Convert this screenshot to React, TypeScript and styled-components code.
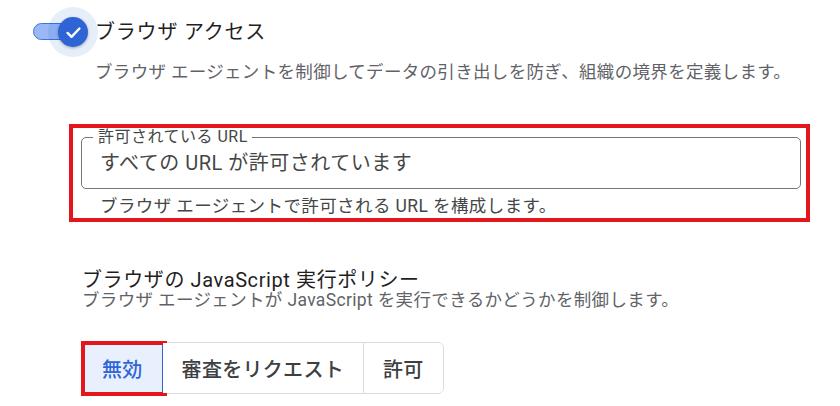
import styled, { createGlobalStyle } from 'styled-components';

const GlobalStyle = createGlobalStyle`
  body {
    margin: 0;
    background: #ffffff;
    font-family: Roboto, 'Noto Sans CJK JP', sans-serif;
    color: #1f1f1f;
  }
`;

const Page = styled.div`
  padding: 8px 0 0 33px;
  width: 840px;
  height: 406px;
  box-sizing: border-box;
  overflow: hidden;
`;

const HeaderRow = styled.div`
  display: flex;
  align-items: center;
  height: 48px;
`;

const Toggle = styled.span`
  position: relative;
  flex: none;
  width: 62px;
  height: 48px;
`;

const Track = styled.span`
  position: absolute;
  left: 0;
  top: 15px;
  width: 52px;
  height: 17px;
  border-radius: 9px;
  background: #9ab8f4;
  border: 1px solid #3f74de;
  box-sizing: border-box;
`;

const Halo = styled.span`
  position: absolute;
  left: 15px;
  top: -1px;
  width: 50px;
  height: 50px;
  border-radius: 50%;
  background: rgba(11, 87, 208, 0.1);
`;

const Thumb = styled.span`
  position: absolute;
  left: 25px;
  top: 9px;
  width: 30px;
  height: 30px;
  border-radius: 50%;
  background: #2e64d6;
  box-shadow: 0 1px 3px rgba(0, 0, 0, 0.3);
  display: flex;
  align-items: center;
  justify-content: center;
`;

const Title = styled.div`
  font-size: 20px;
  line-height: 24px;
  letter-spacing: 0.8px;
  color: #1f1f1f;
`;

const Description = styled.div`
  margin: 4px 0 0 62px;
  font-size: 17.5px;
  line-height: 24px;
  letter-spacing: 0.32px;
  color: #5f6368;
  white-space: nowrap;
`;

const Highlight = styled.div`
  margin: 40px 0 0 36px;
  width: 741px;
  border: 4px solid #e3161c;
  box-sizing: border-box;
  padding: 9px 5px 1px 8px;
`;

const Field = styled.div`
  position: relative;
  height: 52px;
  border: 1px solid #747775;
  border-radius: 5px;
  box-sizing: border-box;
  padding: 0 18px;
  display: flex;
  align-items: center;
`;

const FieldLabel = styled.span`
  position: absolute;
  left: 11px;
  top: -10px;
  padding: 0 4px 0 5px;
  background: #ffffff;
  font-size: 16px;
  line-height: 18px;
  letter-spacing: 0.5px;
  color: #444746;
`;

const FieldValue = styled.span`
  font-size: 20px;
  line-height: 24px;
  letter-spacing: 0.5px;
  color: #444746;
`;

const Helper = styled.div`
  margin: 6px 0 0 19px;
  font-size: 17.5px;
  line-height: 22px;
  letter-spacing: 0.4px;
  color: #444746;
`;

const Section = styled.div`
  margin: 48px 0 0 49px;
`;

const SectionTitle = styled.div`
  font-size: 20px;
  line-height: 20px;
  letter-spacing: 0.6px;
  color: #1f1f1f;
`;

const SectionSub = styled.div`
  margin-top: 1px;
  font-size: 17.5px;
  line-height: 18px;
  letter-spacing: 0.35px;
  color: #5f6368;
`;

const Segmented = styled.div`
  display: inline-flex;
  margin-top: 33px;
  height: 52px;
  border: 1px solid #dadce0;
  border-radius: 6px;
  box-sizing: border-box;
`;

const Segment = styled.button<{ selected?: boolean; last?: boolean }>`
  position: relative;
  padding: 0 19px;
  border: none;
  border-right: ${(p) => (p.last ? 'none' : p.selected ? '1px solid #2e64d6' : '1px solid #dadce0')};
  background: ${(p) => (p.selected ? '#e8f0fe' : '#ffffff')};
  color: ${(p) => (p.selected ? '#2e64d6' : '#3c4043')};
  font-family: Roboto, 'Noto Sans CJK JP', sans-serif;
  font-size: 20px;
  font-weight: 500;
  letter-spacing: 0.3px;
  border-radius: ${(p) => (p.selected ? '5px 0 0 5px' : p.last ? '0 5px 5px 0' : '0')};

  ${(p) =>
    p.selected &&
    `
    &::after {
      content: '';
      position: absolute;
      left: -2px;
      top: -2px;
      right: -5px;
      bottom: -3px;
      border: 4px solid #e3161c;
    }
  `}
`;

function Check() {
  return (
    <svg width='19' height='19' viewBox='0 0 24 24' fill='none'>
      <path d='M4.5 12.5l5 5L19.5 7' stroke='#ffffff' strokeWidth='3' strokeLinecap='round' strokeLinejoin='round' />
    </svg>
  );
}

export default function App() {
  return (
    <Page>
      <GlobalStyle />
      <HeaderRow>
        <Toggle>
          <Track />
          <Halo />
          <Thumb>
            <Check />
          </Thumb>
        </Toggle>
        <Title>ブラウザ アクセス</Title>
      </HeaderRow>
      <Description>
        ブラウザ エージェントを制御してデータの引き出しを防ぎ、組織の境界を定義します。
      </Description>

      <Highlight>
        <Field>
          <FieldLabel>許可されている URL</FieldLabel>
          <FieldValue>すべての URL が許可されています</FieldValue>
        </Field>
        <Helper>ブラウザ エージェントで許可される URL を構成します。</Helper>
      </Highlight>

      <Section>
        <SectionTitle>ブラウザの JavaScript 実行ポリシー</SectionTitle>
        <SectionSub>ブラウザ エージェントが JavaScript を実行できるかどうかを制御します。</SectionSub>
        <Segmented>
          <Segment selected>無効</Segment>
          <Segment>審査をリクエスト</Segment>
          <Segment last>許可</Segment>
        </Segmented>
      </Section>
    </Page>
  );
}
